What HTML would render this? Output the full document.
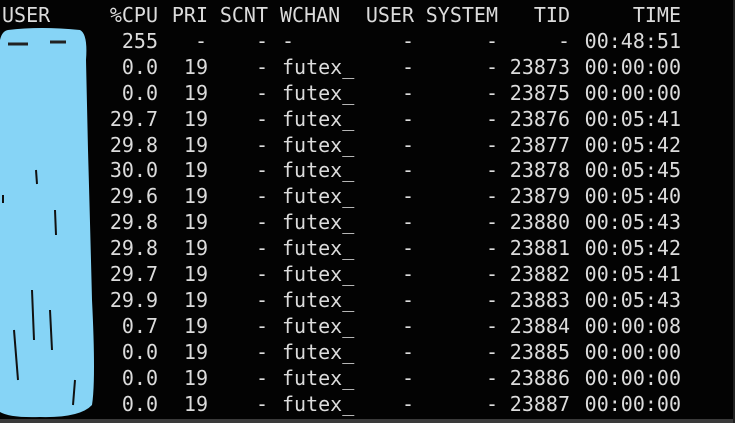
<!DOCTYPE html>
<html><head><meta charset="utf-8"><style>
html,body{margin:0;padding:0;background:#000;}
#t{position:relative;width:735px;height:423px;background:#030303;overflow:hidden;font-family:"DejaVu Sans Mono","Liberation Mono",monospace;font-size:20px;color:#dcdcdc;}
.c{position:absolute;white-space:pre;line-height:26px;}
.r{text-align:right;}
#bb{position:absolute;left:0;top:419px;width:735px;height:4px;background:#3a3a3a;}
#rb{position:absolute;right:0;top:0;width:2px;height:423px;background:#222;}
</style></head><body><div id="t">
<div id="rows"></div>
<script>
var rows=[
["USER","%CPU","PRI","SCNT","WCHAN","USER","SYSTEM","TID","TIME"],
["","255","-","-","-","-","-","-","00:48:51"],
["","0.0","19","-","futex_","-","-","23873","00:00:00"],
["","0.0","19","-","futex_","-","-","23875","00:00:00"],
["","29.7","19","-","futex_","-","-","23876","00:05:41"],
["","29.8","19","-","futex_","-","-","23877","00:05:42"],
["","30.0","19","-","futex_","-","-","23878","00:05:45"],
["","29.6","19","-","futex_","-","-","23879","00:05:40"],
["","29.8","19","-","futex_","-","-","23880","00:05:43"],
["","29.8","19","-","futex_","-","-","23881","00:05:42"],
["","29.7","19","-","futex_","-","-","23882","00:05:41"],
["","29.9","19","-","futex_","-","-","23883","00:05:43"],
["","0.7","19","-","futex_","-","-","23884","00:00:08"],
["","0.0","19","-","futex_","-","-","23885","00:00:00"],
["","0.0","19","-","futex_","-","-","23886","00:00:00"],
["","0.0","19","-","futex_","-","-","23887","00:00:00"]];
var h='';
for(var i=0;i<rows.length;i++){
 var y=2+i*25.9, r=rows[i];
 var hdr=i==0;
 h+='<div class="c" style="left:2px;top:'+y+'px">'+r[0]+'</div>';
 h+='<div class="c" style="right:'+(735-158)+'px;top:'+y+'px">'+r[1]+'</div>';
 h+='<div class="c" style="right:'+(735-(hdr?208:(r[2]=='-'?207:208)))+'px;top:'+y+'px">'+r[2]+'</div>';
 h+='<div class="c" style="right:'+(735-(hdr?268:268))+'px;top:'+y+'px">'+r[3]+'</div>';
 h+='<div class="c" style="left:'+(hdr?280:282)+'px;top:'+y+'px">'+r[4]+'</div>';
 h+='<div class="c" style="right:'+(735-(hdr?414:414))+'px;top:'+y+'px">'+r[5]+'</div>';
 h+='<div class="c" style="right:'+(735-(hdr?498:498))+'px;top:'+y+'px">'+r[6]+'</div>';
 h+='<div class="c" style="right:'+(735-570)+'px;top:'+y+'px">'+r[7]+'</div>';
 h+='<div class="c" style="right:'+(735-681)+'px;top:'+y+'px">'+r[8]+'</div>';
}
document.getElementById('rows').innerHTML=h;
</script>
<svg style="position:absolute;left:0;top:0" width="735" height="423">
<path d="M8 30 Q40 26 80 30 Q88 34 86 60 L88 150 Q90 220 92 300 Q96 380 92 405 Q80 418 40 417 Q10 418 0 412 L0 40 Q2 31 8 30 Z" fill="#86d4f6"/>
<path d="M36 170 l1 14 M55 210 l1 25 M32 290 l2 50 M50 310 l2 40 M14 330 l4 50 M75 380 l-2 25 M3 195 l0 8" stroke="#111" stroke-width="2" fill="none"/>
<path d="M8 44 h20 M50 42 h16" stroke="#222" stroke-width="3"/>
</svg>
<div id="bb"></div><div id="rb"></div>
</div></body></html>
